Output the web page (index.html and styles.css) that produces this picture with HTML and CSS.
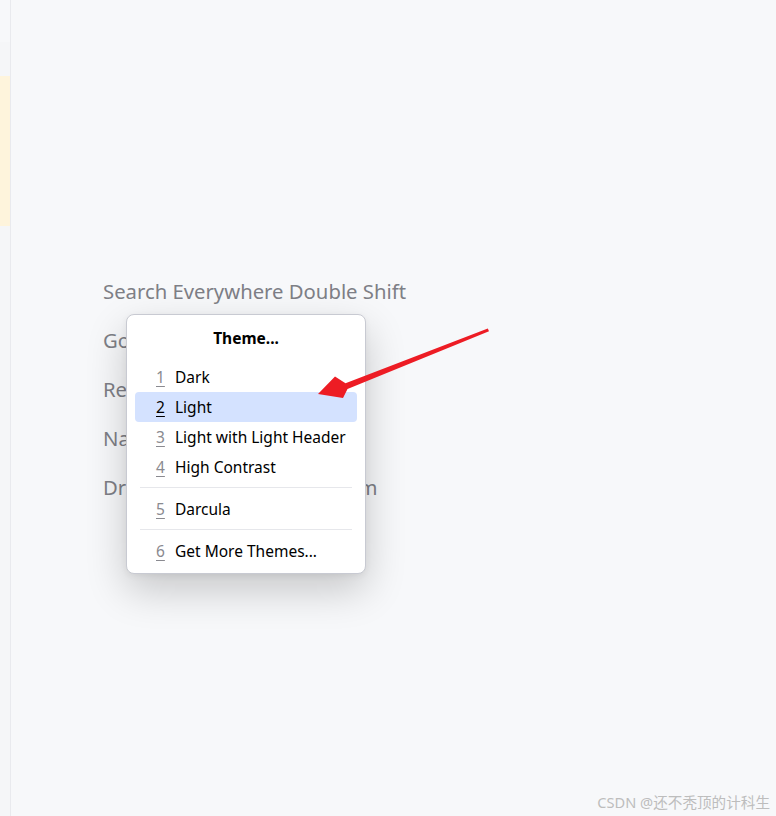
FILE: index.html
```html
<!DOCTYPE html>
<html lang="en">
<head>
<meta charset="utf-8">
<title>Theme switcher</title>
<link rel="stylesheet" href="styles.css">
</head>
<body>
<div class="app">
  <aside class="gutter">
    <div class="g-top"></div>
    <div class="g-mid"></div>
    <div class="g-mark"></div>
  </aside>
  <main class="stage">
    <ul class="hints">
      <li>Search Everywhere Double Shift</li>
      <li>Go to File Ctrl+Shift+N</li>
      <li>Recent Files Ctrl+E</li>
      <li>Navigation Bar Alt+Home</li>
      <li>Drop files here to open them</li>
    </ul>
  </main>

  <div class="popup">
    <div class="popup-title">Theme...</div>
    <ul class="menu">
      <li class="item"><span class="num">1</span><span class="label">Dark</span></li>
      <li class="item selected"><span class="num">2</span><span class="label">Light</span></li>
      <li class="item"><span class="num">3</span><span class="label">Light with Light Header</span></li>
      <li class="item"><span class="num">4</span><span class="label">High Contrast</span></li>
      <li class="sep"></li>
      <li class="item"><span class="num">5</span><span class="label">Darcula</span></li>
      <li class="sep"></li>
      <li class="item"><span class="num">6</span><span class="label">Get More Themes...</span></li>
    </ul>
  </div>

  <svg class="arrow" viewBox="310 320 185 85" width="185" height="85">
    <polygon fill="#ed1c24" points="487.8,328.6 489,331.2 347.5,389 343,398 318,394 335,376.5 345.5,383.2"/>
  </svg>

  <div class="watermark">CSDN @还不秃顶的计科生</div>
</div>
</body>
</html>
```
FILE: styles.css
```css
html, body {
  margin: 0;
  padding: 0;
  background: #f7f8fa;
}
body {
  font-family: "Noto Sans", "Open Sans", "Noto Sans CJK SC", sans-serif;
}
.app {
  position: relative;
  width: 776px;
  height: 816px;
  display: flex;
  overflow: hidden;
}
.gutter {
  width: 10px;
  flex: 0 0 10px;
  border-right: 1px solid #e9eaee;
  display: flex;
  flex-direction: column;
  background: #f5f6f8;
}
.g-top {
  height: 42px;
  background: #f7f8fa;
}
.g-mid {
  height: 34px;
}
.g-mark {
  height: 150px;
  background: #fef4dc;
}
.stage {
  flex: 1;
  padding: 267px 0 0 92px;
}
.hints {
  list-style: none;
  margin: 0;
  padding: 0;
  font-size: 20.3px;
  line-height: 49px;
  color: #7e7f86;
  white-space: nowrap;
}
.popup {
  position: absolute;
  left: 126px;
  top: 314px;
  width: 240px;
  box-sizing: border-box;
  background: #fff;
  border: 1px solid #c8cad2;
  border-radius: 8px;
  box-shadow: 0 16px 40px rgba(0, 0, 0, 0.2), 0 2px 6px rgba(0, 0, 0, 0.06);
  padding: 12px 8px 7px;
  font-size: 15.5px;
  color: #000;
}
.popup-title {
  text-align: center;
  font-weight: 700;
  line-height: 22px;
  margin-bottom: 13px;
}
.menu {
  list-style: none;
  margin: 0;
  padding: 0;
}
.item {
  height: 30px;
  display: flex;
  align-items: center;
  padding-left: 21px;
  border-radius: 4px;
  white-space: nowrap;
}
.item.selected {
  background: #d4e2ff;
}
.num {
  width: 19px;
  color: #8a8a90;
  text-decoration: underline;
  text-underline-offset: 3px;
  text-decoration-thickness: 1px;
}
.selected .num {
  color: #000;
}
.sep {
  height: 1px;
  background: #e6e7eb;
  margin: 5px 5px 6px;
}
.arrow {
  position: absolute;
  left: 310px;
  top: 320px;
}
.watermark {
  position: absolute;
  right: 6px;
  bottom: 4px;
  font-size: 14.6px;
  color: #bdbdbd;
  font-family: "Noto Sans", "Noto Sans CJK SC", sans-serif;
}
```
